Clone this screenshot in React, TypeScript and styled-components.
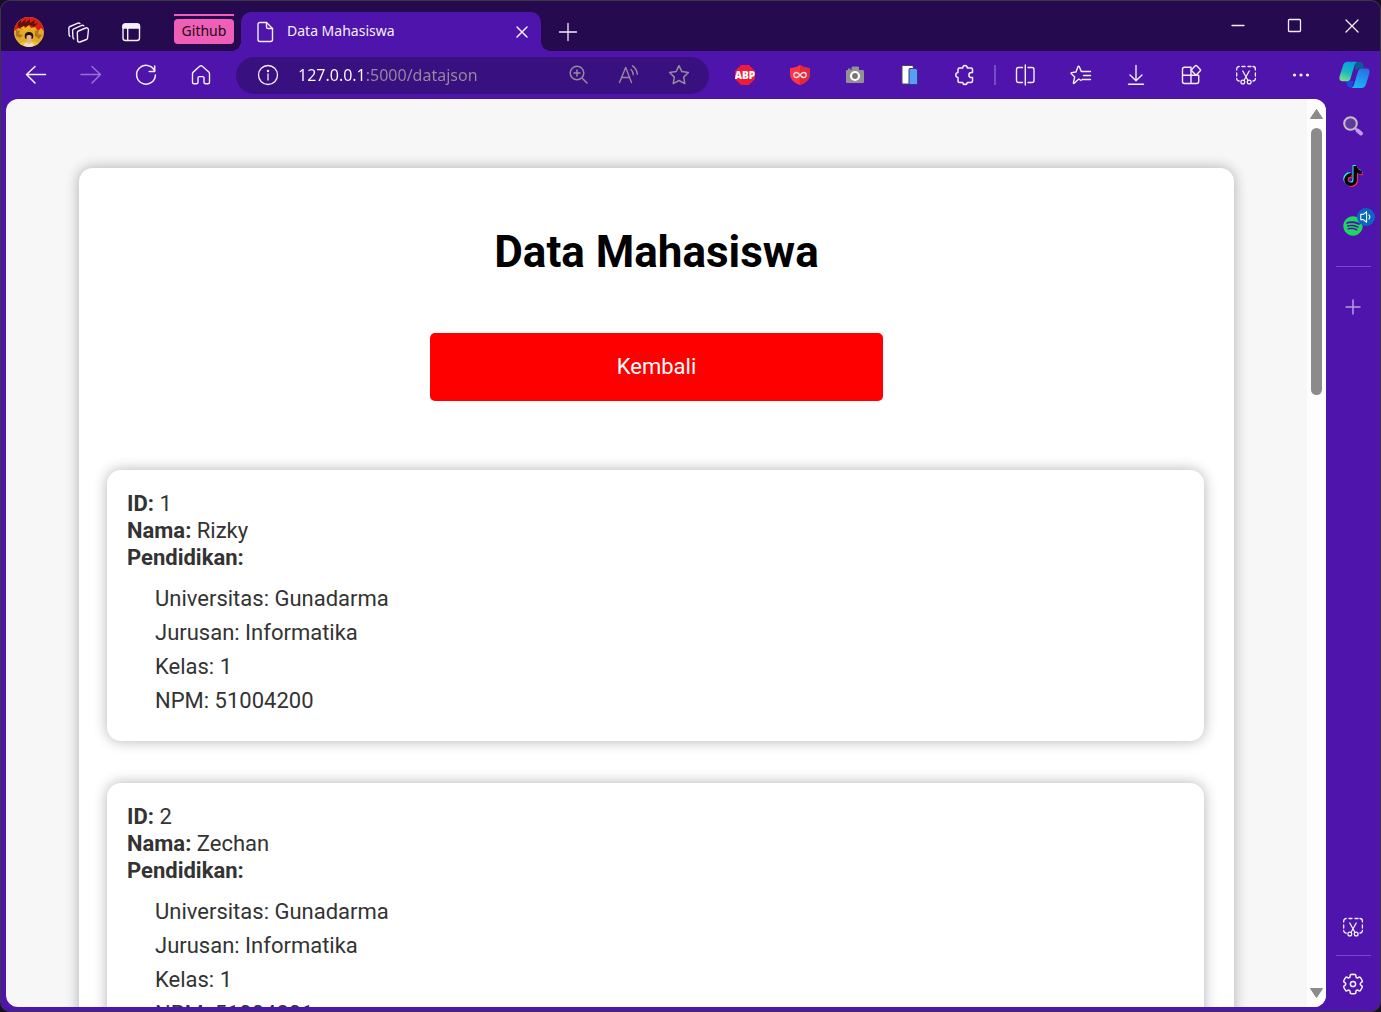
import React from "react";
import styled, { createGlobalStyle, css } from "styled-components";
import { FaSpotify, FaTiktok } from "react-icons/fa6";

const purple = "#4e14ab";
const deep = "#260a50";
const field = "#391080";
const ui = '"Noto Sans", "Open Sans", sans-serif';

const GlobalStyle = createGlobalStyle`
  *, *::before, *::after { box-sizing: border-box; }
  html, body { margin: 0; background: #15101f; }
  button, input { font: inherit; }
`;

const Shell = styled.div`
  display: flex;
  flex-direction: column;
  height: 100vh;
  overflow: hidden;
  border: 1px solid #3b3741;
  border-radius: 10px;
  background: ${purple};
  font-family: ${ui};
`;

const TitleBar = styled.header`
  display: flex;
  height: 50px;
  flex: none;
  padding-left: 4px;
  background: ${deep};
`;

const TabStrip = styled.div`
  display: flex;
  align-items: center;
  padding-top: 11px;
`;

const IconButton = styled.button<{ $w?: number; $h?: number; $color?: string }>`
  display: flex;
  align-items: center;
  justify-content: center;
  flex: none;
  width: ${(p) => p.$w ?? 55}px;
  height: ${(p) => p.$h ?? 38}px;
  padding: 0;
  border: 0;
  background: none;
  color: ${(p) => p.$color ?? "#f4effb"};
  cursor: pointer;
  svg { display: block; }
`;

const GroupChip = styled.button`
  display: flex;
  flex-direction: column;
  gap: 3px;
  align-self: flex-start;
  width: 60px;
  margin: 2px 7px 0 17px;
  padding: 0;
  border: 0;
  background: none;
  color: #1d0712;
  font-size: 14px;
  line-height: 23px;
  &::before {
    content: "";
    height: 2px;
    background: #ef5fb8;
  }
`;

const ChipLabel = styled.span`
  padding-bottom: 2px;
  border-radius: 4px;
  background: #ef5fb8;
  text-align: center;
`;

const Tab = styled.div`
  position: relative;
  display: flex;
  align-items: center;
  width: 300px;
  height: 39px;
  padding: 0 7px 0 12px;
  border-radius: 10px 10px 0 0;
  background: ${purple};
  color: #f4effb;
  &::before, &::after {
    content: "";
    position: absolute;
    bottom: 0;
    width: 10px;
    height: 10px;
  }
  &::before {
    right: 100%;
    background: radial-gradient(circle at 0 0, transparent 10px, ${purple} 10px);
  }
  &::after {
    left: 100%;
    background: radial-gradient(circle at 100% 0, transparent 10px, ${purple} 10px);
  }
`;

const TabTitle = styled.span`
  flex: 1;
  margin-left: 10px;
  padding-bottom: 2px;
  font-size: 14px;
  line-height: 20px;
`;

const WindowControls = styled.div`
  display: flex;
  margin-left: auto;
`;

const Toolbar = styled.nav`
  display: flex;
  align-items: center;
  flex: none;
  height: 48px;
  padding-left: 7px;
`;

const AddressBar = styled.label`
  display: flex;
  align-items: center;
  flex: 1;
  min-width: 0;
  height: 37px;
  margin: 0 8px;
  padding: 0 5px 0 20px;
  border-radius: 19px;
  background: ${field};
  color: #f4effb;
`;

const AddressInput = styled.input`
  flex: 1;
  min-width: 0;
  margin-left: 18px;
  padding: 0;
  border: 0;
  outline: 0;
  color: #968a9f;
  font-size: 16px;
  line-height: 24px;
  /* the host part is bright, the rest of the address dimmed */
  background: linear-gradient(to right, #ffffff 68px, #968a9f 68px);
  background-clip: text;
  -webkit-background-clip: text;
  -webkit-text-fill-color: transparent;
`;

const ToolDivider = styled.span`
  width: 2px;
  height: 20px;
  margin: 0 2px;
  background: #7a4cc4;
`;

const Body = styled.div`
  display: flex;
  flex: 1;
  min-height: 0;
`;

const Viewport = styled.div`
  display: flex;
  flex: 1;
  min-width: 0;
  margin: 0 0 4px 5px;
  overflow: hidden;
  border-radius: 12px;
  background: #f7f7f7;
`;

const Page = styled.main`
  flex: 1;
  min-width: 0;
  padding: 69px 73px;
  overflow-y: auto;
  scrollbar-width: none;
  font-family: Roboto, sans-serif;
`;

const Container = styled.section`
  padding: 57px 28px 40px;
  border-radius: 14px;
  background: #fff;
  box-shadow: 0 0 14px rgba(0, 0, 0, 0.3);
`;

const Heading = styled.h1`
  margin: 0 0 53px;
  color: #000;
  font-size: 44px;
  line-height: 55px;
  font-weight: 700;
  text-align: center;
`;

const BackLink = styled.a`
  display: block;
  width: 453px;
  max-width: 100%;
  margin: 0 auto 69px;
  padding: 20px;
  border-radius: 5px;
  background: #f00;
  color: #fff;
  font-size: 22px;
  line-height: 28px;
  text-align: center;
  text-decoration: none;
`;

const CardList = styled.div`
  display: flex;
  flex-direction: column;
  gap: 42px;
  margin-right: 2px;
`;

const Card = styled.article`
  padding: 20px 20px 23px;
  border-radius: 14px;
  background: #fff;
  box-shadow: 0 0 14px rgba(0, 0, 0, 0.3);
  color: #333;
  font-size: 22px;
  line-height: 27px;
`;

const Details = styled.ul`
  margin: 11px 0 0;
  padding: 0 0 0 28px;
  list-style: none;
  line-height: 34px;
`;

const Scrollbar = styled.div`
  display: flex;
  flex-direction: column;
  align-items: center;
  flex: none;
  width: 19px;
  padding: 10px 0 9px;
  background: #fdfdfd;
`;

const ScrollThumb = styled.div`
  width: 11px;
  height: 30%;
  margin: 9px 0 auto;
  border-radius: 6px;
  background: #8b8b8b;
`;

const Sidebar = styled.aside`
  display: flex;
  flex-direction: column;
  align-items: center;
  flex: none;
  width: 54px;
  padding: 2px 0;
`;

const SideDivider = styled.hr<{ $gap: number }>`
  width: 35px;
  margin: ${(p) => p.$gap}px 0;
  border: 0;
  border-top: 1px solid #7a48c8;
`;

const SideSpacer = styled.div`
  flex: 1;
`;

const Stack = styled.span<{ $layered?: boolean }>`
  position: relative;
  display: block;
  width: 20px;
  height: 20px;
  ${(p) =>
    p.$layered &&
    css`
      svg { position: absolute; inset: 0; }
      svg:nth-child(1) { transform: translate(-1px, -1px); }
      svg:nth-child(2) { transform: translate(1px, 1px); }
    `}
`;

const SoundBadge = styled.span`
  position: absolute;
  top: -8px;
  left: 14px;
  display: flex;
  align-items: center;
  justify-content: center;
  width: 18px;
  height: 18px;
  border-radius: 50%;
  background: #0a66c2;
  color: #fff;
`;

function Line({ children, size = 24, w = 1.3 }: { children: React.ReactNode; size?: number; w?: number }) {
  return (
    <svg
      width={size}
      height={size}
      viewBox="0 0 24 24"
      fill="none"
      stroke="currentColor"
      strokeWidth={w}
      strokeLinecap="round"
      strokeLinejoin="round"
      aria-hidden="true"
    >
      {children}
    </svg>
  );
}

const Avatar = () => (
  <svg width="30" height="30" viewBox="0 0 30 30" aria-hidden="true">
    <defs>
      <clipPath id="avatar-clip"><circle cx="15" cy="15" r="15" /></clipPath>
    </defs>
    <g clipPath="url(#avatar-clip)">
      <rect width="30" height="30" fill="#e0aa2c" />
      <path d="M0 0h30v14l-3-3-3 3-3-4-4 3-4-3-4 3-4-2-5 3z" fill="#d81e17" />
      <path d="M4 6l3-3 0 3 5-4-1 4 5-4 0 4 5-3-1 4 4-1-4 4-4-2-3 3-3-2-3 3-3-2z" fill="#64100c" />
      <path d="M6 11l4-2 1 2 4-3 2 3 5-1-4 4-3-2-4 3-2-2z" fill="#f3b01f" />
      <path d="M2 13l4 1-1 3 4 1-3 3-4-2zM21 14l4-1-1 4 4 1-3 4-4-3z" fill="#b5771c" />
      <path d="M3 30c1-4 5-5 9-6h6c4 1 8 2 9 6z" fill="#efc030" />
      <path d="M11 21c-1-4 1-6 4-6s5 2 4 6l-1 1h-6z" fill="#27120f" />
      <path d="M12.500 19c1-1.500 4-1.500 5 0v4c-.6 3-4.400 3-5 0z" fill="#e5b190" />
      <path d="M10 27l3-1.500 2 1.500 2-1.500 3 1.500v3H10z" fill="#eadacb" />
    </g>
  </svg>
);

const Workspaces = () => (
  <Line w={1.4}>
    <path d="M11.5 11 18.6 8a2 2 0 0 1 2.8 2.2l-.8 7.6a2 2 0 0 1-1.2 1.7L13 22a1.7 1.7 0 0 1-2.4-1.6l-.3-7.6a2 2 0 0 1 1.2-1.8z" />
    <path d="M6.8 18.9a2 2 0 0 1-.9-1.6l-.3-6.6a2 2 0 0 1 1.2-1.9l8-3.4a1.8 1.8 0 0 1 1.9.4" />
    <path d="M2.9 16.3a2 2 0 0 1-.8-1.5l-.3-6.4A2 2 0 0 1 3 6.500l8-3.400a1.800 1.800 0 0 1 1.900.400" />
  </Line>
);

const TabActions = () => (
  <Line w={1.4}>
    <rect x="4" y="4" width="16.500" height="16.500" rx="2.500" />
    <path d="M4 8V6.500A2.500 2.500 0 0 1 6.500 4H18a2.500 2.500 0 0 1 2.500 2.500V8z" fill="currentColor" />
    <path d="M8.700 8v12.500" />
  </Line>
);

const FileIcon = () => (
  <Line w={1.4}>
    <path d="M13.500 2.500H7a2 2 0 0 0-2 2v15a2 2 0 0 0 2 2h10.500a2 2 0 0 0 2-2V8.500z" />
    <path d="M13.500 2.500v4.500a1.500 1.500 0 0 0 1.500 1.500h4.500" />
  </Line>
);

const Snip = () => (
  <Line>
    <path d="M2.700 7V6a2.500 2.500 0 0 1 2.500-2.500M8 3.500h3M14 3.500h3M19 3.500A2.500 2.500 0 0 1 21.400 6v1M21.400 10v3M2.700 10v3M2.700 15.500A2.500 2.500 0 0 0 5.200 18M21.400 15.500a2.500 2.500 0 0 1-2.400 2.500" />
    <path d="M8.800 8l5.200 9.500M15.200 8 10 17.500" />
    <circle cx="8.800" cy="19" r="1.900" />
    <circle cx="15.200" cy="19" r="1.900" />
  </Line>
);

const Copilot = () => (
  <svg width="31" height="28" viewBox="0 0 31 28" aria-hidden="true">
    <defs>
      <linearGradient id="cp-a" x1="0.500" y1="0" x2="0.200" y2="1">
        <stop offset="0" stopColor="#0aa0e0" />
        <stop offset="0.500" stopColor="#17b9c0" />
        <stop offset="1" stopColor="#7be08a" />
      </linearGradient>
      <linearGradient id="cp-b" x1="0.700" y1="0" x2="0.300" y2="1">
        <stop offset="0" stopColor="#2a6fe0" />
        <stop offset="1" stopColor="#19b6fb" />
      </linearGradient>
    </defs>
    <path d="M16 1h5c2 0 3 1.500 3.400 3.500L25 7.500h-5c-2 0-3 1-3.500 2.500z" fill="#075f93" />
    <path d="M14.500 20l-.8 4c-.5 1.600-1 2.500-2.500 2.500-2 0-3-1.500-3.500-3.500L7 20z" fill="#1d49dc" />
    <path d="M8.500 .8H18c-1.500.7-2 2-2.500 3.700l-4 13c-.6 1.800-1.300 2.700-3.500 2.700H4c-3 0-4.200-2-3.400-5L4 4.500C4.800 2 6 .8 8.500 .8z" fill="url(#cp-a)" />
    <path d="M23 7.500h4c3 0 4 2 3.300 5L27 23.300c-.8 2.400-2 3.600-4.500 3.600H12c1.700-.5 2.400-1.600 3-3.500l4-13c.7-2 1.500-2.900 4-2.900z" fill="url(#cp-b)" />
  </svg>
);

const starPath = "M12 2.600l2.900 6 6.500.9-4.700 4.600 1.100 6.500-5.800-3.100-5.800 3.100 1.100-6.500L2.600 9.500l6.500-.9z";

const gearPath =
  "M12 2.250C12.746 2.258 13.477 2.343 14.194 2.503C14.506 2.573 14.740 2.834 14.776 3.152L14.946 4.679C15.023 5.380 15.615 5.911 16.321 5.912C16.510 5.912 16.698 5.872 16.873 5.795L18.274 5.180C18.565 5.052 18.906 5.121 19.123 5.354C20.135 6.435 20.889 7.731 21.328 9.146C21.422 9.451 21.313 9.782 21.056 9.972L19.815 10.887C19.461 11.147 19.252 11.560 19.252 12C19.252 12.439 19.461 12.852 19.816 13.113L21.058 14.028C21.315 14.218 21.424 14.549 21.330 14.854C20.891 16.269 20.138 17.565 19.126 18.646C18.909 18.878 18.569 18.948 18.278 18.821L16.871 18.205C16.469 18.028 16.007 18.054 15.627 18.274C15.246 18.494 14.993 18.881 14.945 19.318L14.776 20.844C14.741 21.159 14.512 21.418 14.204 21.492C12.756 21.836 11.247 21.836 9.798 21.492C9.490 21.418 9.261 21.159 9.226 20.844L9.057 19.320C9.008 18.884 8.754 18.498 8.374 18.279C7.995 18.060 7.533 18.034 7.132 18.209L5.726 18.826C5.434 18.953 5.094 18.883 4.877 18.651C3.865 17.569 3.111 16.271 2.673 14.855C2.579 14.550 2.688 14.219 2.945 14.029L4.188 13.113C4.542 12.853 4.751 12.440 4.751 12C4.751 11.561 4.542 11.148 4.188 10.887L2.945 9.973C2.688 9.783 2.579 9.452 2.673 9.147C3.112 7.732 3.866 6.436 4.878 5.355C5.096 5.122 5.436 5.053 5.727 5.181L7.128 5.796C7.531 5.973 7.994 5.946 8.376 5.723C8.756 5.502 9.009 5.114 9.058 4.678L9.228 3.152C9.264 2.833 9.498 2.573 9.811 2.503C10.528 2.343 11.260 2.259 12 2.250Z";

const students = [
  { id: 1, nama: "Rizky", universitas: "Gunadarma", jurusan: "Informatika", kelas: "1", npm: "51004200" },
  { id: 2, nama: "Zechan", universitas: "Gunadarma", jurusan: "Informatika", kelas: "1", npm: "51004201" },
];

export default function App() {
  return (
    <Shell>
      <GlobalStyle />
      <TitleBar>
        <TabStrip>
          <IconButton $w={48} aria-label="Profile"><Avatar /></IconButton>
          <IconButton $w={52} aria-label="Workspaces"><Workspaces /></IconButton>
          <IconButton $w={52} aria-label="Tab actions"><TabActions /></IconButton>
          <GroupChip><ChipLabel>Github</ChipLabel></GroupChip>
          <Tab>
            <FileIcon />
            <TabTitle>Data Mahasiswa</TabTitle>
            <IconButton $w={24} $h={24} aria-label="Close tab">
              <Line w={1.5}><path d="M7 7l10 10M17 7 7 17" /></Line>
            </IconButton>
          </Tab>
          <IconButton $w={54} aria-label="New tab">
            <Line><path d="M12 3.500v17M3.500 12h17" /></Line>
          </IconButton>
        </TabStrip>
        <WindowControls>
          <IconButton $w={57} $h={50} aria-label="Minimize">
            <Line><path d="M6 11.500h12" /></Line>
          </IconButton>
          <IconButton $w={57} $h={50} aria-label="Maximize">
            <Line><rect x="5.500" y="5.500" width="12" height="12" rx="1" /></Line>
          </IconButton>
          <IconButton $w={57} $h={50} aria-label="Close">
            <Line><path d="M6 6l12 12M18 6 6 18" /></Line>
          </IconButton>
        </WindowControls>
      </TitleBar>

      <Toolbar aria-label="Browser toolbar">
        <IconButton aria-label="Back">
          <Line w={1.500}><path d="M21.500 11.500H2.500M11 3.500 2.500 11.500l8.500 8.500" /></Line>
        </IconButton>
        <IconButton $color="#9673d2" aria-label="Forward">
          <Line w={1.500}><path d="M2 11.500h19.500M13 3.500l8.500 8-8.500 8.500" /></Line>
        </IconButton>
        <IconButton aria-label="Refresh">
          <Line w={1.500}>
            <path d="M20.500 7.700A9.400 9.400 0 1 0 21.400 12" />
            <path d="M20.700 3v5.500H15.200" />
          </Line>
        </IconButton>
        <IconButton aria-label="Home">
          <Line w={1.400}>
            <path d="M10.700 3.300a2 2 0 0 1 2.600 0l6.500 5.800a2 2 0 0 1 .7 1.500v8.700a1.500 1.500 0 0 1-1.500 1.500h-2.500a1.500 1.500 0 0 1-1.500-1.500v-4.500a1.200 1.200 0 0 0-1.200-1.200h-3.600A1.200 1.200 0 0 0 9 14.800v4.500a1.500 1.500 0 0 1-1.500 1.500H5a1.500 1.500 0 0 1-1.500-1.500v-8.700a2 2 0 0 1 .7-1.500z" />
          </Line>
        </IconButton>

        <AddressBar>
          <Line>
            <circle cx="12" cy="12" r="9.500" />
            <path d="M12 11v6" />
            <circle cx="12" cy="8" r=".6" fill="currentColor" />
          </Line>
          <AddressInput aria-label="Address" type="text" defaultValue="127.0.0.1:5000/datajson" />
          <IconButton $w={50} $color="#968a9f" aria-label="Zoom">
            <Line w={1.500}>
              <circle cx="10" cy="10" r="6.800" />
              <path d="M15 15l5 5M10 7v6M7 10h6" />
            </Line>
          </IconButton>
          <IconButton $w={50} $color="#968a9f" aria-label="Read aloud">
            <Line w={1.400}>
              <path d="M2.500 19.500 8.700 4.500l5.800 15M4.800 14.500h7.800" />
              <path d="M14 6.500a7 7 0 0 1 2.200 5.200M15.500 2.800a11 11 0 0 1 4.800 8.500" />
            </Line>
          </IconButton>
          <IconButton $w={50} $color="#968a9f" aria-label="Add to favourites">
            <Line w={1.500}><path d={starPath} /></Line>
          </IconButton>
        </AddressBar>

        <IconButton aria-label="ABP">
          <svg width="20" height="20" viewBox="0 0 20 20">
            <path d="M6 0h8l6 6v8l-6 6H6l-6-6V6z" fill="#ee1b3a" />
            <text x="10" y="14" textAnchor="middle" fill="#fff" fontSize="10" fontWeight="800" fontFamily="Open Sans, sans-serif">ABP</text>
          </svg>
        </IconButton>
        <IconButton aria-label="Ad shield">
          <svg width="20" height="20" viewBox="0 0 20 20" aria-hidden="true">
            <path d="M10 0c3 2 6 2.800 10 3v6c0 5-4 9-10 11C4 18 0 14 0 9V3c4-.2 7-1 10-3z" fill="#ff3347" />
            <path d="M10 0c3 2 6 2.800 10 3v6c0 5-4 9-10 11z" fill="#e02a3b" />
            <path d="M10 10c-1.500-2-2.500-2.500-3.700-2.500a2.500 2.500 0 0 0 0 5c1.200 0 2.200-.5 3.700-2.500s2.500-2.500 3.700-2.500a2.500 2.500 0 0 1 0 5c-1.200 0-2.200-.5-3.700-2.500z" fill="none" stroke="#ffe3e3" strokeWidth="1.300" />
          </svg>
        </IconButton>
        <IconButton aria-label="Screen capture">
          <svg width="20" height="20" viewBox="0 0 20 20" aria-hidden="true">
            <path d="M3 5V3.500h2.500V5h1V3c0-1 .5-1.500 1.500-1.500h4.500c1 0 1.500.5 1.500 1.500v2h3.500c1 0 1.500.5 1.500 1.500v10c0 1-.5 1.500-1.500 1.500H2.500C1.500 18 1 17.500 1 16.500v-10C1 5.500 1.500 5 2.500 5z" fill="#929292" />
            <circle cx="10" cy="11" r="4" fill="#777" stroke="#fff" strokeWidth="2.200" />
          </svg>
        </IconButton>
        <IconButton aria-label="Copy pages">
          <svg width="20" height="22" viewBox="0 0 20 22" aria-hidden="true">
            <path d="M3 1.500h9l1.500 1.500v17H3a1 1 0 0 1-1-1V2.500a1 1 0 0 1 1-1z" fill="#fff" stroke="#4a4660" />
            <path d="M9.500 4.500h6.500l1.500 1.500v14.500H9V5z" fill="#5b9cf8" stroke="#2c3f78" />
          </svg>
        </IconButton>
        <IconButton aria-label="Extensions">
          <Line w={1.500}>
            <path d="M9.600 5C9.900 3.300 10.900 2.600 12 2.600S14.100 3.300 14.400 5H18a1.500 1.500 0 0 1 1.500 1.500V9.400h-1a2.600 2.600 0 0 0 0 5.200h1v3.400a1.500 1.500 0 0 1-1.500 1.500h-3.600c-.3 1.500-1.300 2.100-2.400 2.100s-2.100-.6-2.400-2.100H6.500A1.500 1.500 0 0 1 5 18v-3.500C3.500 14.200 2.800 13.200 2.800 12S3.500 9.800 5 9.500V6.500A1.500 1.500 0 0 1 6.500 5z" />
          </Line>
        </IconButton>
        <ToolDivider />
        <IconButton aria-label="Split screen">
          <Line w={1.400}>
            <path d="M8.500 4.500h-4a2 2 0 0 0-2 2v11a2 2 0 0 0 2 2h4M14 4.500h4a2 2 0 0 1 2 2v11a2 2 0 0 1-2 2h-4M11.300 2v20" />
          </Line>
        </IconButton>
        <IconButton aria-label="Favourites">
          <Line w={1.400}>
            <path d="M12 17.500 9.800 16 5.200 20.300a.5.500 0 0 1-.8-.5l1.300-5.800-3.500-3.400a.6.600 0 0 1 .3-1l4.500-.6L9 3.500a.7.700 0 0 1 1.200 0L12.300 8.500H21.500M14.500 12.500h7M13 16.500h8.500" />
          </Line>
        </IconButton>
        <IconButton aria-label="Downloads">
          <Line w={1.400}><path d="M12 2.500v15M6 12l6 5.700L18 12M4.500 21.300h15" /></Line>
        </IconButton>
        <IconButton aria-label="Apps">
          <Line w={1.400}>
            <path d="M12 4.300H5.500a2 2 0 0 0-2 2v12.200a2 2 0 0 0 2 2h12.200a2 2 0 0 0 2-2v-6.300H3.500M12 4.300v16.200" />
            <path d="M16.300 2.800a1 1 0 0 1 1.400 0l3.600 3.600a1 1 0 0 1 0 1.400l-3.600 3.600a1 1 0 0 1-1.400 0l-3.600-3.600a1 1 0 0 1 0-1.400z" />
          </Line>
        </IconButton>
        <IconButton aria-label="Screenshot"><Snip /></IconButton>
        <IconButton aria-label="More">
          <svg width="24" height="24" viewBox="0 0 24 24" fill="currentColor" aria-hidden="true">
            <circle cx="5.500" cy="12" r="1.600" /><circle cx="12" cy="12" r="1.600" /><circle cx="18.500" cy="12" r="1.600" />
          </svg>
        </IconButton>
        <IconButton $w={52} aria-label="Copilot"><Copilot /></IconButton>
      </Toolbar>

      <Body>
        <Viewport>
          <Page>
            <Container>
              <Heading>Data Mahasiswa</Heading>
              <BackLink href="#">Kembali</BackLink>
              <CardList>
                {students.map((s) => (
                  <Card key={s.id}>
                    <div><strong>ID:</strong> {s.id}</div>
                    <div><strong>Nama:</strong> {s.nama}</div>
                    <div><strong>Pendidikan:</strong></div>
                    <Details>
                      <li>Universitas: {s.universitas}</li>
                      <li>Jurusan: {s.jurusan}</li>
                      <li>Kelas: {s.kelas}</li>
                      <li>NPM: {s.npm}</li>
                    </Details>
                  </Card>
                ))}
              </CardList>
            </Container>
          </Page>
          <Scrollbar aria-hidden="true">
            <svg width="13" height="10" viewBox="0 0 13 10"><path d="M6.500 .5 12.500 9.500H.5z" fill="#8b8b8b" stroke="#8b8b8b" strokeLinejoin="round" /></svg>
            <ScrollThumb />
            <svg width="13" height="10" viewBox="0 0 13 10"><path d="M6.500 9.500 12.500 .5H.5z" fill="#8b8b8b" stroke="#8b8b8b" strokeLinejoin="round" /></svg>
          </Scrollbar>
        </Viewport>

        <Sidebar>
          <IconButton $w={54} $h={50} aria-label="Search">
            <svg width="22" height="22" viewBox="0 0 22 22" aria-hidden="true">
              <path d="M13 13l3 3" stroke="#b9a9cf" strokeWidth="2" />
              <path d="M15.500 15.500l3.500 3" stroke="#c39af5" strokeWidth="4" strokeLinecap="round" />
              <circle cx="8.500" cy="8.500" r="6.300" fill="#5e3a9e" stroke="#c4bfc6" strokeWidth="2" />
            </svg>
          </IconButton>
          <IconButton $w={54} $h={50} aria-label="TikTok">
            <Stack $layered>
              <FaTiktok size={20} color="#25f4ee" />
              <FaTiktok size={20} color="#fe2c55" />
              <FaTiktok size={20} color="#000" />
            </Stack>
          </IconButton>
          <IconButton $w={54} $h={50} aria-label="Spotify, playing">
            <Stack>
              <FaSpotify size={20} color="#1ed760" />
              <SoundBadge>
                <Line size={14} w={1.800}>
                  <path d="M13 3v18L7.500 16.500H3v-9h4.500zM17 8.500a5 5 0 0 1 0 7" />
                </Line>
              </SoundBadge>
            </Stack>
          </IconButton>
          <SideDivider $gap={15} />
          <IconButton $w={54} $h={50} $color="#b79de2" aria-label="Customize">
            <Line w={1.500}><path d="M12 5v14M5 12h14" /></Line>
          </IconButton>
          <SideSpacer />
          <IconButton $w={54} $h={50} aria-label="Screenshot"><Snip /></IconButton>
          <SideDivider $gap={3} />
          <IconButton $w={54} $h={50} aria-label="Settings">
            <Line w={1.500}><path d={gearPath} /><circle cx="12" cy="12" r="2.600" /></Line>
          </IconButton>
        </Sidebar>
      </Body>
    </Shell>
  );
}
